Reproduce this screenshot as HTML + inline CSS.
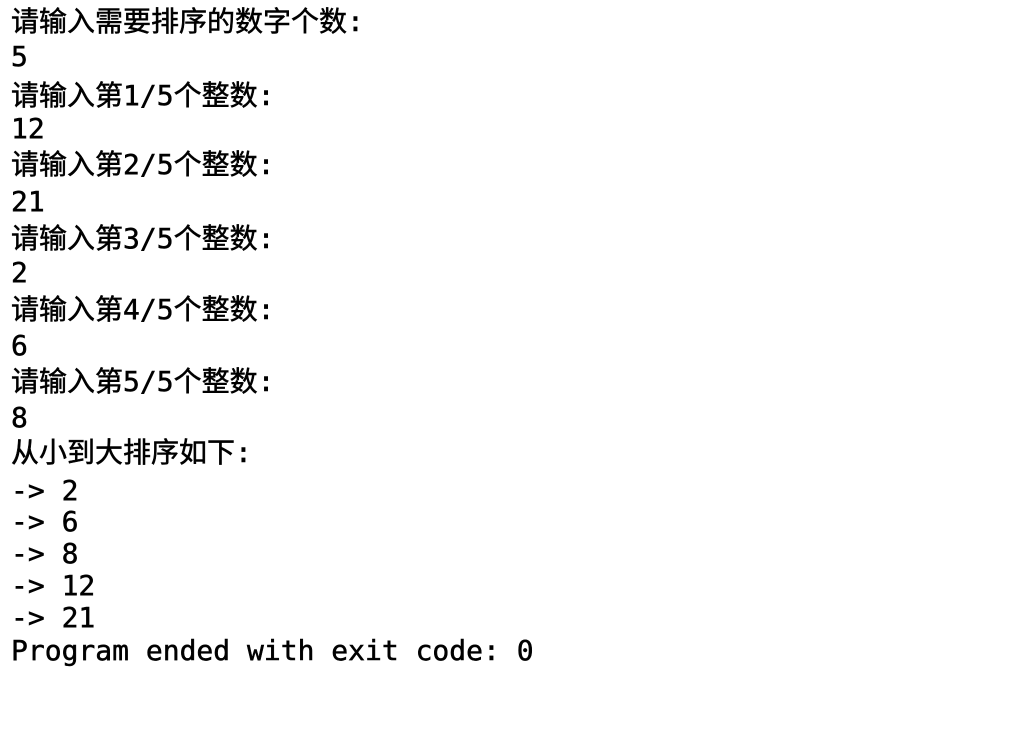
<!DOCTYPE html>
<html><head><meta charset="utf-8"><style>
html,body{margin:0;padding:0;background:#fff;width:1024px;height:736px;overflow:hidden}
div{position:absolute;left:11px;height:34px;line-height:34px;white-space:pre;font-family:"DejaVu Sans Mono","Noto Sans CJK SC",monospace;font-size:28px;color:#000;-webkit-text-stroke:0.5px #000}
</style></head><body>
<div style="top:5px">请输入需要排序的数字个数:</div>
<div style="top:40px">5</div>
<div style="top:79px">请输入第1/5个整数:</div>
<div style="top:112px">12</div>
<div style="top:148px">请输入第2/5个整数:</div>
<div style="top:185px">21</div>
<div style="top:222px">请输入第3/5个整数:</div>
<div style="top:256px">2</div>
<div style="top:293px">请输入第4/5个整数:</div>
<div style="top:329px">6</div>
<div style="top:365px">请输入第5/5个整数:</div>
<div style="top:401px">8</div>
<div style="top:436px">从小到大排序如下:</div>
<div style="top:474px">-&gt; 2</div>
<div style="top:505px">-&gt; 6</div>
<div style="top:537px">-&gt; 8</div>
<div style="top:569px">-&gt; 12</div>
<div style="top:601px">-&gt; 21</div>
<div style="top:634px">Program ended with exit code: 0</div>
</body></html>
